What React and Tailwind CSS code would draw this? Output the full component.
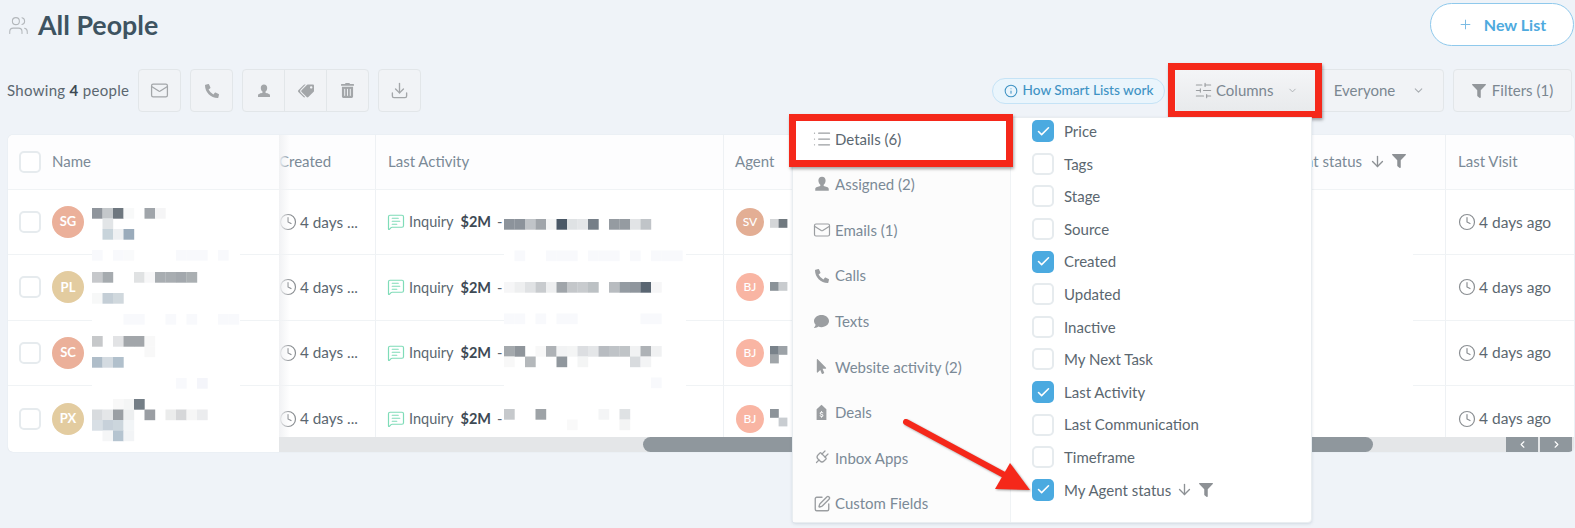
import {
  Users,
  Mail,
  Download,
  SlidersHorizontal,
  ChevronDown,
  ChevronLeft,
  ChevronRight,
  Info,
  Plus,
  Clock,
  MessageSquareText,
  List,
  Plug,
  SquarePen,
  ArrowDown,
  Check,
} from "lucide-react";
import { FaPhoneAlt, FaTags, FaTrashAlt, FaFilter, FaComment, FaMousePointer } from "react-icons/fa";

const CELL = 10.5;

function PersonIcon({ className }) {
  return (
    <svg viewBox="0 0 16 16" className={className} fill="currentColor">
      <path d="M8 1.5c-2 0-3.2 1.5-3.2 3.4 0 1.5.8 3 1.7 3.7v1.2c-1.6.5-4.5 1-4.5 2.6V14h12v-1.6c0-1.6-2.9-2.1-4.5-2.6V8.6c.9-.7 1.7-2.2 1.7-3.7C11.2 3 10 1.5 8 1.5z" />
    </svg>
  );
}

function DealIcon({ className }) {
  return (
    <svg viewBox="0 0 16 16" className={className}>
      <path fill="currentColor" d="M8 .8 12.6 5v10H3.4V5z" />
      <path fill="#fcfcfc" d="M8.4 6.6v.9c.8.1 1.3.5 1.4 1.1l-.9.2c-.1-.3-.3-.5-.9-.5-.5 0-.8.2-.8.5s.3.4 1 .6c.9.2 1.6.5 1.6 1.4 0 .7-.5 1.2-1.4 1.3v.9h-.8v-.9c-.8-.1-1.4-.6-1.5-1.2l.9-.2c.1.4.4.6 1 .6s.9-.2.9-.6-.4-.5-1.1-.7c-.8-.2-1.5-.5-1.5-1.3 0-.7.5-1.1 1.3-1.2v-.9z" />
    </svg>
  );
}

// pixelated (blurred out) text from the original, cells are [col, row, colour]
function Mosaic({ x = 0, y = 0, size = CELL, cells = [], patch, width = 160 }) {
  return (
    <svg width={width} height="65" className="absolute top-0 overflow-visible" style={{ left: x }}>
      {patch && <rect x={patch[0]} y={patch[1]} width={patch[2]} height={patch[3]} fill="#ffffff" />}
      {cells.map(([c, r, color]) => (
        <rect key={`${c}-${r}`} x={c * size} y={y + r * size} width={size + 0.2} height={size + 0.2} fill={color} />
      ))}
    </svg>
  );
}

const FAINT = "#f8f9fc";

const ROWS = [
  {
    initials: "SG",
    avatar: "bg-[#ebb09a]",
    agent: "SV",
    agentBg: "bg-[#e3ae94]",
    name: {
      y: 18,
      patch: [0, 60, 148, 10],
      cells: [
        [0, 0, "#8f959c"], [1, 0, "#c4c8cb"], [2, 0, "#6e777f"], [3, 0, "#f8f9f9"], [5, 0, "#a0a5aa"], [6, 0, "#f5f5f6"],
        [1, 1, "#e2e5e7"],
        [1, 2, "#c8d4db"], [2, 2, "#eef0f2"], [3, 2, "#9aabbb"],
        [0, 4, FAINT], [2, 4, FAINT], [3, 4, "#f9fafb"], [8, 4, FAINT], [9, 4, FAINT], [10, 4, FAINT], [12, 4, FAINT],
      ],
    },
    activity: {
      y: 29,
      patch: [0, 60, 182, 10],
      cells: [
        [0, 0, "#8c939b"], [1, 0, "#8c939b"], [2, 0, "#c0c4c8"], [3, 0, "#a0a5aa"], [4, 0, "#f4f5f5"], [5, 0, "#4a5866"], [6, 0, "#dfe2e4"],
        [7, 0, "#e4e6e8"], [8, 0, "#767f88"], [10, 0, "#959ba1"], [11, 0, "#959ba1"], [12, 0, "#e2e4e6"], [13, 0, "#c0c4c8"],
        [1, 3, FAINT], [4, 3, FAINT], [5, 3, FAINT], [6, 3, FAINT], [8, 3, FAINT], [9, 3, FAINT], [10, 3, FAINT], [12, 3, FAINT], [14, 3, FAINT], [15, 3, FAINT], [16, 3, FAINT],
      ],
    },
    agentCells: [[0, 0, "#d4d6d8"], [1, 0, "#70797f"]],
  },
  {
    initials: "PL",
    avatar: "bg-[#e3cca0]",
    agent: "BJ",
    agentBg: "bg-[#f9b5a3]",
    name: {
      y: 17,
      patch: [0, 58, 148, 10],
      cells: [
        [0, 0, "#c6c8cb"], [1, 0, "#a6abaf"], [4, 0, "#e0e2e3"], [5, 0, "#f7f7f8"], [6, 0, "#a8adb1"], [7, 0, "#a8adb1"], [8, 0, "#a3a8ad"], [9, 0, "#aaafb2"],
        [0, 2, "#f7f8f8"], [1, 2, "#c4ced6"], [2, 2, "#d0d8dd"],
        [3, 4, FAINT], [4, 4, FAINT], [7, 4, FAINT], [9, 4, FAINT], [12, 4, FAINT], [13, 4, FAINT],
      ],
    },
    activity: {
      y: 27,
      patch: [0, 58, 182, 10],
      cells: [
        [0, 0, "#f6f6f7"], [1, 0, "#eeeff0"], [2, 0, "#e0e2e4"], [3, 0, "#c8cbce"], [4, 0, "#eeeff0"], [5, 0, "#a0a5aa"], [6, 0, "#c4c7ca"], [7, 0, "#c8cbce"],
        [8, 0, "#bcc1c4"], [10, 0, "#b8bcc0"], [11, 0, "#949ba2"], [12, 0, "#8f969d"], [13, 0, "#5a6672"], [14, 0, "#f6f6f7"],
        [0, 3, FAINT], [1, 3, FAINT], [3, 3, FAINT], [5, 3, FAINT], [6, 3, FAINT], [13, 3, FAINT], [14, 3, FAINT],
      ],
    },
    agentCells: [[0, 0, "#8a9298"], [1, 0, "#c9cccf"]],
  },
  {
    initials: "SC",
    avatar: "bg-[#ebb09a]",
    agent: "BJ",
    agentBg: "bg-[#f9b5a3]",
    name: {
      y: 15,
      patch: [0, 57, 148, 10],
      cells: [
        [0, 0, "#c6c8ca"], [2, 0, "#e2e3e5"], [3, 0, "#a2a6aa"], [4, 0, "#a2a6aa"], [5, 0, "#f8f8f8"],
        [5, 1, "#f8f8f8"],
        [0, 2, "#afbdc9"], [1, 2, "#d4dbe1"], [2, 2, "#b1c0cc"],
        [8, 4, FAINT], [10, 4, "#f4f5fa"],
      ],
    },
    activity: {
      y: 25,
      patch: [0, 57, 182, 10],
      cells: [
        [0, 0, "#a4a9ad"], [1, 0, "#8f959b"], [3, 0, "#f8f8f8"], [4, 0, "#aeb2b6"], [5, 0, "#f2f3f4"], [6, 0, "#f4f5f5"], [7, 0, "#dcdee1"], [8, 0, "#e4e6e8"],
        [9, 0, "#b8bcc1"], [10, 0, "#bfc3c7"], [11, 0, "#c0c4c7"], [12, 0, "#f1f2f3"], [13, 0, "#aeb2b6"], [14, 0, "#f0f1f2"],
        [0, 1, "#f8f8f8"], [2, 1, "#b4b8bb"], [5, 1, "#90979d"], [7, 1, "#f4f5f5"], [12, 1, "#d8dbde"], [13, 1, "#f3f4f5"],
        [14, 3, FAINT],
      ],
    },
    agentCells: [[0, 0, "#79828a"], [1, 0, "#9ca2a7"], [0, 1, "#a0a5a9"]],
  },
  {
    initials: "PX",
    avatar: "bg-[#e3cca0]",
    agent: "BJ",
    agentBg: "bg-[#f9b5a3]",
    name: {
      y: 13,
      cells: [
        [2, 0, "#f8f8f8"], [3, 0, "#f4f5f5"], [4, 0, "#747e86"],
        [0, 1, "#d8dbde"], [1, 1, "#e4e6e8"], [2, 1, "#9a9fa4"], [3, 1, "#edeff0"], [5, 1, "#9a9ea3"], [7, 1, "#ebecec"], [8, 1, "#d6d7d9"], [9, 1, "#f6f6f6"], [10, 1, "#ebecee"],
        [0, 2, "#d8dfe5"], [1, 2, "#c7d1da"], [2, 2, "#ccd6dd"], [3, 2, "#f2f5f7"],
        [1, 3, "#f5f6f7"], [2, 3, "#b5c4d0"], [3, 3, "#f2f4f6"],
      ],
    },
    activity: {
      y: 23,
      cells: [
        [0, 0, "#c6c9cc"], [3, 0, "#9ea3a7"], [9, 0, "#f4f5f6"], [11, 0, "#dfe2e4"],
        [6, 1, "#f9f9f9"], [11, 1, "#f3f4f4"],
      ],
    },
    agentCells: [[0, 0, "#8c9399"], [1, 1, "#c9cdd1"]],
  },
];

const DETAIL_TABS = [
  { label: "Details (6)", icon: <List className="w-[20px] h-[20px] shrink-0" strokeWidth={1.5} /> },
  { label: "Assigned (2)", icon: <PersonIcon className="w-[18px] h-[18px] shrink-0" /> },
  { label: "Emails (1)", icon: <Mail className="w-[18px] h-[18px] shrink-0" strokeWidth={1.6} /> },
  { label: "Calls", icon: <FaPhoneAlt className="w-[14px] h-[14px] shrink-0" /> },
  { label: "Texts", icon: <FaComment className="w-[15px] h-[15px] shrink-0" /> },
  { label: "Website activity (2)", icon: <FaMousePointer className="w-[15px] h-[15px] shrink-0" /> },
  { label: "Deals", icon: <DealIcon className="w-[17px] h-[17px] shrink-0" /> },
  { label: "Inbox Apps", icon: <Plug className="w-[17px] h-[17px] rotate-45 shrink-0" strokeWidth={1.7} /> },
  { label: "Custom Fields", icon: <SquarePen className="w-[18px] h-[18px] shrink-0" strokeWidth={1.8} /> },
];

const COLUMN_OPTIONS = [
  { label: "Price", on: true },
  { label: "Tags" },
  { label: "Stage" },
  { label: "Source" },
  { label: "Created", on: true },
  { label: "Updated" },
  { label: "Inactive" },
  { label: "My Next Task" },
  { label: "Last Activity", on: true },
  { label: "Last Communication" },
  { label: "Timeframe" },
  { label: "My Agent status", on: true, sort: true },
];

function Checkbox({ on }) {
  if (on) {
    return (
      <span className="w-[22px] h-[22px] rounded-[5px] bg-[#4baae0] flex items-center justify-center shrink-0">
        <Check className="w-[15px] h-[15px] text-white" strokeWidth={2.5} />
      </span>
    );
  }
  return <span className="w-[22px] h-[22px] rounded-[5px] bg-white border-2 border-[#e6ebee] shrink-0" />;
}

function ToolButton({ children, className = "" }) {
  return (
    <button className={`w-[43px] h-[43px] flex items-center justify-center bg-[#f1f3f6] border border-[#e2e6e9] text-[#a3a6a9] ${className}`}>
      {children}
    </button>
  );
}

function SortMarks() {
  return (
    <span className="flex items-center gap-[6px] text-[#8d9195]">
      <ArrowDown className="w-[17px] h-[19px]" strokeWidth={1.9} />
      <FaFilter className="w-[14px] h-[14px]" />
    </span>
  );
}

export default function App() {
  return (
    <div className="relative w-[1575px] h-[528px] overflow-hidden bg-[#eff3f8] font-['Lato',sans-serif] text-[15px] text-[#5b6770]">
      {/* title */}
      <div className="flex items-start justify-between pl-[8px] pr-[1px] pt-[3px]">
        <div className="flex items-center gap-[9px] h-[44px]">
          <Users className="w-[21px] h-[21px] text-[#b3b7bb]" strokeWidth={1.2} />
          <h1 className="text-[26.8px] font-bold text-[#3e5361] leading-none">All People</h1>
        </div>
        <button className="w-[144px] h-[43px] rounded-full bg-white border-[1.5px] border-[#8fc9ec] text-[#4eaade] text-[16px] font-bold flex items-center justify-center gap-[11px]">
          <Plus className="w-[15px] h-[15px] text-[#7cbce4]" strokeWidth={1.6} />
          New List
        </button>
      </div>

      {/* toolbar */}
      <div className="flex items-center justify-between mt-[22px] pl-[7px] pr-[3px]">
        <div className="flex items-center">
          <span className="w-[131px] whitespace-nowrap tracking-[0.3px]">
            Showing <b className="text-[#3e4a54]">4</b> people
          </span>
          <ToolButton className="rounded-[4px]">
            <Mail className="w-[19px] h-[19px]" strokeWidth={1.6} />
          </ToolButton>
          <ToolButton className="rounded-[4px] ml-[9px]">
            <FaPhoneAlt className="w-[14px] h-[14px]" />
          </ToolButton>
          <div className="flex ml-[9px]">
            <ToolButton className="rounded-l-[4px]">
              <PersonIcon className="w-[16px] h-[16px]" />
            </ToolButton>
            <ToolButton className="-ml-px">
              <FaTags className="w-[16px] h-[16px] -scale-x-100" />
            </ToolButton>
            <ToolButton className="-ml-px rounded-r-[4px]">
              <FaTrashAlt className="w-[13px] h-[15px]" />
            </ToolButton>
          </div>
          <ToolButton className="rounded-[4px] ml-[9px]">
            <Download className="w-[19px] h-[19px]" strokeWidth={1.7} />
          </ToolButton>
        </div>

        <div className="flex items-center">
          <span className="w-[173px] h-[26px] mr-[11px] rounded-full bg-[#eaf5fc] border border-[#c5e3f6] text-[#3f93c4] text-[13.6px] font-medium flex items-center justify-center gap-[5px] whitespace-nowrap">
            <Info className="w-[14px] h-[14px]" strokeWidth={1.8} />
            How Smart Lists work
          </span>
          <div className="relative">
            <button className="w-[145px] h-[43px] pl-[18px] bg-gradient-to-b from-[#f4f5f7] to-[#e8eaec] text-[#7b8791] flex items-center gap-[3px]">
              <SlidersHorizontal className="w-[19px] h-[19px] text-[#9a9da0]" strokeWidth={1.4} />
              Columns
              <ChevronDown className="w-[11px] h-[11px] ml-[11px] text-[#a9adb1]" />
            </button>
            <span className="absolute -left-[8px] -right-[1px] -top-[6px] -bottom-[6px] border-[7px] border-[#f5281a] shadow-[1px_2px_3px_rgba(0,0,0,0.35)]" />
          </div>
          <button className="w-[123px] h-[43px] rounded-r-[4px] bg-[#f1f3f6] border border-[#e2e6e9] text-[#7b8791] flex items-center justify-center gap-[17px] pr-[6px]">
            Everyone
            <ChevronDown className="w-[13px] h-[13px] text-[#a9adb1]" />
          </button>
          <button className="w-[119px] h-[43px] ml-[9px] rounded-[4px] bg-[#f1f3f6] border border-[#e2e6e9] text-[#7b8791] flex items-center justify-center gap-[6px]">
            <FaFilter className="w-[14px] h-[14px] text-[#93979b]" />
            Filters (1)
          </button>
        </div>
      </div>

      {/* table */}
      <div className="relative mt-[23px] ml-[8px] mr-[1px] h-[317px] rounded-[5px] bg-white overflow-hidden shadow-[0_0_1px_rgba(120,140,160,0.3)]">
        <div className="flex h-[55px] bg-[#fdfdfe] border-b border-[#f0f3f5] text-[#7b8a97]">
          <div className="w-[271px] flex items-center pl-[11px] gap-[11px]">
            <Checkbox />
            <span className="-mt-[2px]">Name</span>
          </div>
          <div className="w-[97px] flex items-center pb-[2px] border-r border-[#eef1f4]">Created</div>
          <div className="w-[348px] flex items-center pb-[2px] pl-[12px] border-r border-[#eef1f4]">Last Activity</div>
          <div className="w-[722px] flex items-center justify-between pb-[2px] pl-[11px] pr-[39px] border-r border-[#eef1f4]">
            Agent
            <span className="flex items-center gap-[7px]">
              My Agent status
              <SortMarks />
            </span>
          </div>
          <div className="w-[128px] flex items-center pb-[2px] pl-[12px]">Last Visit</div>
        </div>

        {ROWS.map((row, i) => (
          <div key={row.initials} className={`flex h-[65.33px] ${i < 3 ? "border-b border-[#f0f3f5]" : ""}`}>
            <div className="relative w-[271px] flex items-center pl-[11px] gap-[11px]">
              <Checkbox />
              <span className={`w-[32px] h-[32px] rounded-full ${row.avatar} text-white text-[13px] font-bold flex items-center justify-center`}>
                {row.initials}
              </span>
              <Mosaic x={84} {...row.name} />
            </div>
            <div className="w-[97px] flex items-center gap-[3px] border-r border-[#eef1f4] whitespace-nowrap text-[15.3px]">
              <Clock className="w-[18px] h-[18px] text-[#8b8f93]" strokeWidth={1.6} />
              4 days ...
            </div>
            <div className="relative w-[348px] flex items-center pl-[11px] border-r border-[#eef1f4] whitespace-nowrap text-[14.5px]">
              <MessageSquareText className="w-[18px] h-[18px] text-[#7fdcb8]" strokeWidth={1.6} />
              <span className="ml-[4px]">Inquiry</span>
              <b className="ml-[7px] text-[#3e4a54]">$2M</b>
              <span className="ml-[6px]">-</span>
              <Mosaic x={128} {...row.activity} />
            </div>
            <div className="relative w-[722px] flex items-center pl-[12px] border-r border-[#eef1f4]">
              <span className={`w-[28px] h-[28px] rounded-full ${row.agentBg} text-white text-[12px] font-medium flex items-center justify-center`}>
                {row.agent}
              </span>
              <Mosaic x={46} y={29 - i * 2} size={8.6} cells={row.agentCells} width={20} />
              {i < 3 && <Mosaic x={580} patch={[0, 60, 109, 8]} width={109} />}
            </div>
            <div className="w-[128px] flex items-center pl-[12px] gap-[3px] whitespace-nowrap text-[15.5px]">
              <Clock className="w-[18px] h-[18px] text-[#8b8f93]" strokeWidth={1.6} />
              4 days ago
            </div>
          </div>
        ))}

        {/* frozen column edge */}
        <div className="absolute left-[271px] top-0 bottom-0 w-[11px] bg-gradient-to-r from-[#f1f2f4] to-transparent" />

        {/* horizontal scrollbar */}
        <div className="absolute left-[271px] right-0 bottom-0 h-[15px] bg-[#e3e5e7]/95">
          <div className="absolute left-[364px] w-[730px] h-[15px] rounded-full bg-[#8f979d]" />
          <div className="absolute right-[2px] flex gap-[2px]">
            <span className="w-[32px] h-[15px] bg-[#8f979d] text-white flex items-center justify-center">
              <ChevronLeft className="w-[11px] h-[11px]" strokeWidth={2.5} />
            </span>
            <span className="w-[32px] h-[15px] bg-[#8f979d] text-white flex items-center justify-center">
              <ChevronRight className="w-[11px] h-[11px]" strokeWidth={2.5} />
            </span>
          </div>
        </div>
      </div>

      {/* columns dropdown */}
      <div className="absolute left-[792px] top-[117px] w-[520px] h-[406px] flex rounded-b-[4px] bg-white border border-[#e9edf0] shadow-[0_1px_3px_rgba(120,140,160,0.25)]">
        <div className="w-[218px] bg-[#fcfcfc] border-r border-[#f0f3f5] -mt-[2px]">
          {DETAIL_TABS.map((tab, i) => (
            <div key={tab.label} className="relative h-[45.6px] flex items-center pl-[21px] text-[#7b8a97]">
              {i === 0 && <span className="absolute -left-[4px] -right-[3px] -top-[2px] -bottom-[5px] bg-white border-[7px] border-[#f5281a] shadow-[1px_2px_3px_rgba(0,0,0,0.35)]" />}
              <span className="relative w-[15px] mr-[6px] flex justify-center text-[#9b9ea1]">{tab.icon}</span>
              <span className={`relative ${i === 0 ? "text-[#5b6770]" : ""}`}>{tab.label}</span>
            </div>
          ))}
        </div>
        <div className="flex-1 pl-[21px] -mt-[3px]">
          {COLUMN_OPTIONS.map((opt) => (
            <div key={opt.label} className="h-[32.6px] flex items-center gap-[10px]">
              <Checkbox on={opt.on} />
              <span className="flex items-center gap-[5px]">
                {opt.label}
                {opt.sort && <SortMarks />}
              </span>
            </div>
          ))}
        </div>
      </div>

      {/* annotation arrow */}
      <svg className="absolute inset-0 pointer-events-none drop-shadow-[1px_1px_1px_rgba(0,0,0,0.35)]" width="1575" height="528">
        <line x1="906" y1="422" x2="1008" y2="477" stroke="#f5281a" strokeWidth="6" strokeLinecap="round" />
        <polygon points="1030,490 1010,463 995,489" fill="#f5281a" />
      </svg>
    </div>
  );
}
